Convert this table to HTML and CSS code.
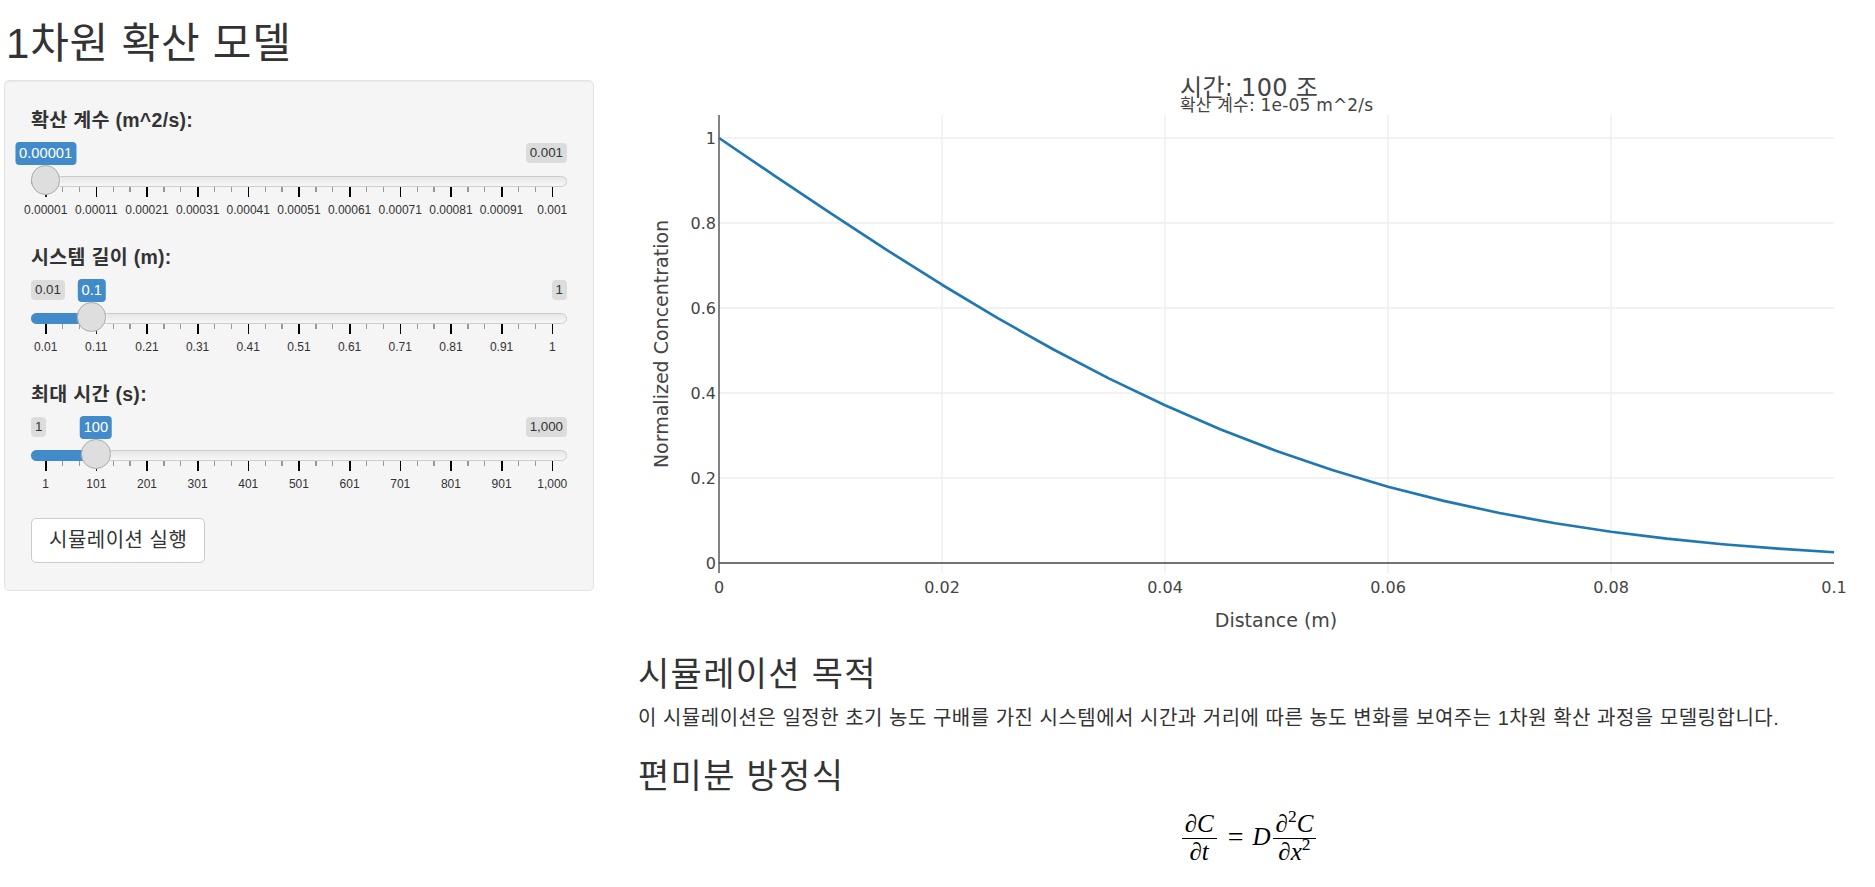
FILE: index.html
```html
<!DOCTYPE html>
<html lang="ko">
<head>
<meta charset="utf-8">
<title>1차원 확산 모델</title>
<link rel="stylesheet" href="styles.css">
</head>
<body>
<h1 class="page-title">1차원 확산 모델</h1>
<div class="layout">
  <aside class="well">
    <div class="form-group">
      <label class="control-label">확산 계수 (m^2/s):</label>
      <div class="irs">
        <span class="irs-line"></span>
        <span class="irs-bar" style="width: 14.65px"></span>
        <span class="irs-max">0.001</span>
        <span class="irs-single" style="left: 14.65px">0.00001</span>
        <div class="irs-grid">
          <div class="irs-ticks"></div>
          <div class="irs-grid-labels">
            <span>0.00001</span><span>0.00011</span><span>0.00021</span><span>0.00031</span><span>0.00041</span><span>0.00051</span><span>0.00061</span><span>0.00071</span><span>0.00081</span><span>0.00091</span><span>0.001</span>
          </div>
        </div>
        <span class="irs-handle" style="left: 14.65px"></span>
      </div>
    </div>
    <div class="form-group">
      <label class="control-label">시스템 길이 (m):</label>
      <div class="irs">
        <span class="irs-line"></span>
        <span class="irs-bar" style="width: 60.7px"></span>
        <span class="irs-min">0.01</span>
        <span class="irs-max">1</span>
        <span class="irs-single" style="left: 60.7px">0.1</span>
        <div class="irs-grid">
          <div class="irs-ticks"></div>
          <div class="irs-grid-labels">
            <span>0.01</span><span>0.11</span><span>0.21</span><span>0.31</span><span>0.41</span><span>0.51</span><span>0.61</span><span>0.71</span><span>0.81</span><span>0.91</span><span>1</span>
          </div>
        </div>
        <span class="irs-handle" style="left: 60.7px"></span>
      </div>
    </div>
    <div class="form-group last">
      <label class="control-label">최대 시간 (s):</label>
      <div class="irs">
        <span class="irs-line"></span>
        <span class="irs-bar" style="width: 64.9px"></span>
        <span class="irs-min">1</span>
        <span class="irs-max">1,000</span>
        <span class="irs-single" style="left: 64.9px">100</span>
        <div class="irs-grid">
          <div class="irs-ticks"></div>
          <div class="irs-grid-labels">
            <span>1</span><span>101</span><span>201</span><span>301</span><span>401</span><span>501</span><span>601</span><span>701</span><span>801</span><span>901</span><span>1,000</span>
          </div>
        </div>
        <span class="irs-handle" style="left: 64.9px"></span>
      </div>
    </div>
    <button class="btn" type="button">시뮬레이션 실행</button>
  </aside>

  <main class="main">
    <svg class="plot" width="1222" height="564" viewBox="0 0 1222 564">
      <g class="grid">
        <line x1="304" y1="49" x2="304" y2="507"/>
        <line x1="527" y1="49" x2="527" y2="507"/>
        <line x1="750" y1="49" x2="750" y2="507"/>
        <line x1="973" y1="49" x2="973" y2="507"/>
        <line x1="81" y1="412" x2="1196" y2="412"/>
        <line x1="81" y1="327" x2="1196" y2="327"/>
        <line x1="81" y1="242" x2="1196" y2="242"/>
        <line x1="81" y1="157" x2="1196" y2="157"/>
        <line x1="81" y1="72" x2="1196" y2="72"/>
      </g>
      <g class="zero">
        <line x1="81" y1="497" x2="1196" y2="497"/>
        <line x1="81" y1="49" x2="81" y2="507"/>
      </g>
      <polyline class="trace" points="81,72 136.75,109.83 192.5,147.2 248.25,183.64 304,218.74 359.75,252.14 415.5,283.51 471.25,312.61 527,339.29 582.75,363.42 638.5,384.99 694.25,404.03 750,420.79 805.75,434.91 861.5,447.05 917.25,457.25 973,465.7 1028.75,472.63 1084.5,478.23 1140.25,482.7 1196,486.23"/>
      <g class="ticklabels yticks">
        <text x="78" y="502.8">0</text>
        <text x="78" y="417.8">0.2</text>
        <text x="78" y="332.8">0.4</text>
        <text x="78" y="247.8">0.6</text>
        <text x="78" y="162.8">0.8</text>
        <text x="78" y="77.8">1</text>
      </g>
      <g class="ticklabels xticks">
        <text x="81" y="527">0</text>
        <text x="304" y="527">0.02</text>
        <text x="527" y="527">0.04</text>
        <text x="750" y="527">0.06</text>
        <text x="973" y="527">0.08</text>
        <text x="1196" y="527">0.1</text>
      </g>
      <text class="axis-title" x="638" y="561">Distance (m)</text>
      <text class="axis-title" transform="translate(30 278) rotate(-90)">Normalized Concentration</text>
      <text class="chart-title" x="542" y="30">시간: 100 조</text>
      <text class="chart-subtitle" x="542" y="45">확산 계수: 1e-05 m^2/s</text>
    </svg>

    <h3>시뮬레이션 목적</h3>
    <p>이 시뮬레이션은 일정한 초기 농도 구배를 가진 시스템에서 시간과 거리에 따른 농도 변화를 보여주는 1차원 확산 과정을 모델링합니다.</p>
    <h3>편미분 방정식</h3>
    <div class="math">
      <span class="frac"><span class="num">∂C</span><span class="den">∂t</span></span>
      <span class="eq">=</span>
      <span class="var">D</span>
      <span class="frac"><span class="num">∂<sup>2</sup>C</span><span class="den">∂x<sup>2</sup></span></span>
    </div>
  </main>
</div>
</body>
</html>
```

FILE: styles.css
```css
html, body {
  margin: 0;
  padding: 0;
  background: #fff;
}

body {
  font-family: "Liberation Sans", "Noto Sans CJK KR", sans-serif;
  font-size: 18.7px;
  line-height: 1.42857;
  color: #333;
}

.page-title {
  font-size: 42px;
  line-height: 44px;
  font-weight: 400;
  letter-spacing: 0.8px;
  margin: 22px 0 0 6px;
}

.layout {
  display: flex;
  align-items: flex-start;
  padding-left: 4px;
}

/* sidebar */
.well {
  box-sizing: border-box;
  width: 590px;
  flex: none;
  margin-top: 14px;
  padding: 27px 26px 27px;
  background: #f5f5f5;
  border: 1px solid #e3e3e3;
  border-radius: 5px;
  box-shadow: inset 0 1px 1px rgba(0, 0, 0, .05);
}

.form-group {
  margin-bottom: 23px;
}

.form-group.last {
  margin-bottom: 22px;
}

.control-label {
  display: block;
  font-weight: 700;
  font-size: 19.5px;
  letter-spacing: 0.3px;
  line-height: 24px;
  margin-bottom: 10px;
}

.irs {
  position: relative;
  height: 80px;
  font-family: "Liberation Sans", "Noto Sans CJK KR", sans-serif;
}

.irs-line {
  position: absolute;
  top: 34px;
  left: 0;
  right: 0;
  height: 10.7px;
  box-sizing: border-box;
  border: 1px solid #cccccc;
  border-radius: 16px;
  background: linear-gradient(to bottom, #dedede -50%, #ffffff 150%);
}

.irs-bar {
  position: absolute;
  top: 34px;
  left: 0;
  height: 10.7px;
  background: #428bca;
  border-radius: 16px 0 0 16px;
}

.irs-handle {
  position: absolute;
  top: 23.4px;
  width: 29.3px;
  height: 29.3px;
  margin-left: -14.65px;
  box-sizing: border-box;
  border-radius: 50%;
  background: #dedede;
  border: 1px solid #ababab;
  box-shadow: 1px 1px 3px rgba(255, 255, 255, .3);
}

.irs-single {
  position: absolute;
  top: 0;
  transform: translateX(-50%);
  background: #428bca;
  color: #fff;
  font-size: 14.7px;
  line-height: 19.6px;
  padding: 1.5px 4px;
  border-radius: 4px;
  white-space: nowrap;
}

.irs-min,
.irs-max {
  position: absolute;
  top: 1px;
  background: rgba(0, 0, 0, .1);
  color: #333;
  font-size: 13.3px;
  line-height: 17.8px;
  padding: 1px 4px;
  border-radius: 4px;
}

.irs-min { left: 0; }
.irs-max { right: 0; }

.irs-grid {
  position: absolute;
  top: 44.5px;
  left: 0;
  right: 0;
  height: 32px;
}

.irs-ticks {
  margin-left: 13.9px;
  width: 508.2px;
  height: 10.7px;
  background:
    repeating-linear-gradient(90deg, #000 0 1.5px, transparent 1.5px 50.67px) left top / 100% 10.7px no-repeat,
    repeating-linear-gradient(90deg, #999 0 1.3px, transparent 1.3px 16.89px) left top / 100% 5.3px no-repeat;
}

.irs-grid-labels {
  display: flex;
  margin-left: -10.68px;
  margin-top: 6.3px;
}

.irs-grid-labels span {
  flex: none;
  width: 50.67px;
  text-align: center;
  font-size: 12px;
  line-height: 14px;
  color: #333;
  white-space: nowrap;
}

.btn {
  display: inline-block;
  font-family: "Liberation Sans", "Noto Sans CJK KR", sans-serif;
  font-size: 20px;
  letter-spacing: 0.5px;
  line-height: 27px;
  padding: 8px 17px;
  color: #333;
  background: #fff;
  border: 1px solid #ccc;
  border-radius: 5px;
}

/* main column */
.main {
  width: 1222px;
  margin-left: 44px;
  flex: none;
}

.plot {
  display: block;
  overflow: visible;
  font-family: "DejaVu Sans", "Noto Sans CJK KR", sans-serif;
}

.grid line {
  stroke: #eeeeee;
  stroke-width: 1.33;
}

.zero line {
  stroke: #444444;
  stroke-width: 1.33;
}

.trace {
  fill: none;
  stroke: #1f77b4;
  stroke-width: 2.67;
  stroke-linejoin: round;
}

.ticklabels text {
  font-size: 16px;
  fill: #444;
}

.yticks { text-anchor: end; }
.xticks { text-anchor: middle; }

.axis-title {
  font-size: 19px;
  fill: #444;
  text-anchor: middle;
}

.chart-title {
  font-size: 24px;
  letter-spacing: 0.3px;
  fill: #444;
}

.chart-subtitle {
  font-size: 17px;
  letter-spacing: 0.2px;
  fill: #444;
}

.main h3 {
  font-size: 34px;
  line-height: 35.2px;
  font-weight: 400;
  letter-spacing: 1.3px;
  margin: 26.7px 0 13.3px;
}

.main p {
  font-size: 20px;
  letter-spacing: 0.5px;
  line-height: 26.7px;
  margin: 0 0 13.3px;
}

.math {
  display: flex;
  justify-content: center;
  align-items: center;
  margin-top: 17px;
  font-family: "Liberation Serif", "DejaVu Serif", serif;
  font-size: 25px;
  font-style: italic;
  color: #000;
}

.frac {
  display: inline-flex;
  flex-direction: column;
  align-items: center;
}

.frac .num {
  line-height: 25px;
  padding: 0 3px 2px;
  border-bottom: 1.3px solid #000;
}

.frac .den {
  line-height: 25px;
  padding: 0 3px;
}

.frac sup {
  font-size: 70%;
  line-height: 0;
  vertical-align: 0.55em;
  font-style: normal;
}

.eq {
  font-style: normal;
  font-size: 28px;
  margin: 0 9px 0 11px;
}

.var {
  margin-right: 2px;
}
```
